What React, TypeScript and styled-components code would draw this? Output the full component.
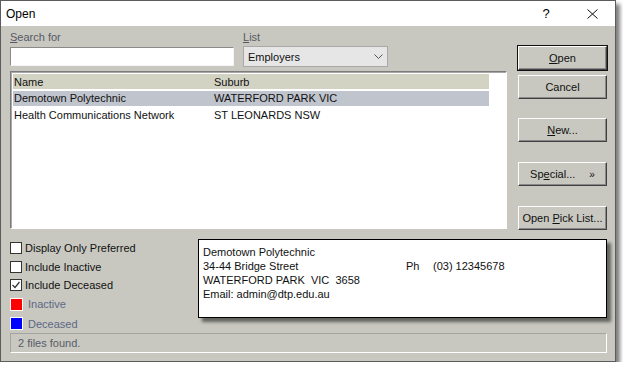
import React from 'react';
import styled, { createGlobalStyle } from 'styled-components';

const Global = createGlobalStyle`
  html, body {
    margin: 0;
    padding: 0;
    background: #ffffff;
  }
  body {
    font-family: 'Liberation Sans', Arial, sans-serif;
    font-size: 11px;
    color: #111;
  }
`;

const Window = styled.div`
  width: 616px;
  height: 362px;
  box-sizing: border-box;
  border: 1px solid #5c5c5c;
  background: #c8c8c0;
  box-shadow: 4px 4px 4px rgba(0, 0, 0, 0.5);
  display: flex;
  flex-direction: column;
`;

const TitleBar = styled.div`
  height: 25px;
  flex: none;
  background: #fff;
  display: flex;
  align-items: center;
  padding-left: 5px;
  font-size: 12px;
  color: #000;
`;

const Title = styled.span`
  flex: 1;
`;

const TitleButton = styled.div`
  width: 46px;
  height: 25px;
  display: flex;
  align-items: center;
  justify-content: center;
  font-size: 13px;
`;

const Body = styled.div`
  flex: 1;
  padding: 4px 7px 0 9px;
  display: flex;
  flex-direction: column;
`;

const Top = styled.div`
  display: grid;
  grid-template-columns: 497px 89px;
  column-gap: 11px;
  align-items: start;
`;

const LeftPane = styled.div`
  display: flex;
  flex-direction: column;
`;

const Fields = styled.div`
  display: flex;
  gap: 9px;
`;

const Field = styled.div<{ $w: number }>`
  width: ${(p) => p.$w}px;
  display: flex;
  flex-direction: column;
`;

const Label = styled.label`
  height: 16px;
  line-height: 14px;
  color: #555a66;
  font-size: 11px;
  u {
    text-decoration: underline;
  }
`;

const TextInput = styled.div`
  height: 19px;
  margin-top: 1px;
  box-sizing: border-box;
  background: #fff;
  border: 1px solid;
  border-color: #8a8a8a #f4f4f4 #f4f4f4 #8a8a8a;
`;

const Select = styled.div`
  height: 21px;
  box-sizing: border-box;
  background: #e6e6e6;
  border: 1px solid #a8a8a8;
  display: flex;
  align-items: center;
  padding: 0 4px 0 4px;
  color: #111;
  span {
    flex: 1;
  }
`;

const ListBox = styled.div`
  margin-top: 4px;
  height: 158px;
  box-sizing: border-box;
  background: #fff;
  border: 1px solid;
  border-color: #7c7c7c #fff #fff #7c7c7c;
  box-shadow: inset 1px 1px 0 #a8a8a8;
  padding: 2px 0 0 2px;
  display: flex;
  flex-direction: column;
  gap: 1.5px;
`;

const Row = styled.div<{ $bg?: string }>`
  width: 475px;
  height: 15px;
  display: grid;
  grid-template-columns: 200px 1fr;
  align-items: center;
  padding-left: 1px;
  background: ${(p) => p.$bg || 'transparent'};
  color: #111;
  white-space: nowrap;
`;

const Buttons = styled.div`
  padding-top: 16px;
  display: flex;
  flex-direction: column;
`;

const Button = styled.div<{ $default?: boolean; $gap: number }>`
  height: 24px;
  margin-top: ${(p) => p.$gap}px;
  box-sizing: border-box;
  border: 1px solid;
  border-color: #fdfdfd #404040 #404040 #fdfdfd;
  box-shadow: ${(p) => (p.$default ? '0 0 0 1px #111, inset -1px -1px 0 #8a8a8a' : 'inset -1px -1px 0 #8a8a8a')};
  display: flex;
  align-items: center;
  justify-content: center;
  color: #111;
  font-size: 11px;
  gap: 14px;
  u {
    text-decoration: underline;
  }
`;

const Chevrons = styled.span`
  font-size: 10px;
`;

const Bottom = styled.div`
  margin-top: 9px;
  height: 93px;
  display: flex;
`;

const Options = styled.div`
  width: 188px;
  padding-top: 3px;
  display: flex;
  flex-direction: column;
  gap: 6.6px;
`;

const Option = styled.div`
  height: 12px;
  display: flex;
  align-items: center;
  gap: 3px;
  color: #111;
`;

const Box = styled.div`
  width: 12px;
  height: 12px;
  box-sizing: border-box;
  background: #fff;
  border: 1px solid #333;
  display: flex;
  align-items: center;
  justify-content: center;
`;

const Legend = styled.div`
  height: 13px;
  display: flex;
  align-items: center;
  gap: 5px;
  color: #5d6784;
`;

const Swatch = styled.div<{ $c: string }>`
  width: 13px;
  height: 13px;
  box-sizing: border-box;
  border: 1px solid #fff;
  background: ${(p) => p.$c};
`;

const Info = styled.div`
  width: 409px;
  height: 79px;
  box-sizing: border-box;
  background: #fff;
  border: 1px solid #000;
  box-shadow: 4px 4px 3px rgba(0, 0, 0, 0.5);
  padding: 5px 0 0 4px;
  display: grid;
  grid-template-columns: 203px 27px 1fr;
  grid-auto-rows: 14px;
  align-items: center;
  color: #111;
  white-space: nowrap;
`;

const Status = styled.div`
  margin-top: 1px;
  width: 597px;
  height: 20px;
  box-sizing: border-box;
  border: 1px solid;
  border-color: #a4a4a0 #fff #fff #a4a4a0;
  display: flex;
  align-items: center;
  padding-left: 7px;
  color: #565c6a;
`;

export default function App() {
  return (
    <>
      <Global />
      <Window>
        <TitleBar>
          <Title>Open</Title>
          <TitleButton>?</TitleButton>
          <TitleButton>
            <svg width="11" height="10" viewBox="0 0 11 10">
              <path d="M0.5 0.5 L10.5 9.5 M10.5 0.5 L0.5 9.5" stroke="#111" strokeWidth="1" fill="none" />
            </svg>
          </TitleButton>
        </TitleBar>
        <Body>
          <Top>
            <LeftPane>
              <Fields>
                <Field $w={224}>
                  <Label>
                    <u>S</u>earch for
                  </Label>
                  <TextInput />
                </Field>
                <Field $w={145}>
                  <Label>
                    <u>L</u>ist
                  </Label>
                  <Select>
                    <span>Employers</span>
                    <svg width="9" height="5" viewBox="0 0 9 5">
                      <path d="M0.5 0.5 L4.5 4.5 L8.5 0.5" stroke="#555" fill="none" />
                    </svg>
                  </Select>
                </Field>
              </Fields>
              <ListBox>
                <Row $bg="#d3d3c4">
                  <span>Name</span>
                  <span>Suburb</span>
                </Row>
                <Row $bg="#c0c4cc">
                  <span>Demotown Polytechnic</span>
                  <span>WATERFORD PARK VIC</span>
                </Row>
                <Row>
                  <span>Health Communications Network</span>
                  <span>ST LEONARDS NSW</span>
                </Row>
              </ListBox>
            </LeftPane>
            <Buttons>
              <Button $default $gap={0}>
                <span>
                  <u>O</u>pen
                </span>
              </Button>
              <Button $gap={5}>Cancel</Button>
              <Button $gap={19}>
                <span>
                  <u>N</u>ew...
                </span>
              </Button>
              <Button $gap={20}>
                <span>
                  Sp<u>e</u>cial...
                </span>
                <Chevrons>»</Chevrons>
              </Button>
              <Button $gap={20}>
                <span>
                  Open <u>P</u>ick List...
                </span>
              </Button>
            </Buttons>
          </Top>
          <Bottom>
            <Options>
              <Option>
                <Box />
                Display Only Preferred
              </Option>
              <Option>
                <Box />
                Include Inactive
              </Option>
              <Option>
                <Box>
                  <svg width="10" height="10" viewBox="0 0 10 10">
                    <path d="M1.5 5 L4 7.5 L8.5 2" stroke="#333" strokeWidth="1.2" fill="none" />
                  </svg>
                </Box>
                Include Deceased
              </Option>
              <Legend>
                <Swatch $c="#ff0000" />
                Inactive
              </Legend>
              <Legend>
                <Swatch $c="#0000ff" />
                Deceased
              </Legend>
            </Options>
            <Info>
              <span>Demotown Polytechnic</span>
              <span />
              <span />
              <span>34-44 Bridge Street</span>
              <span>Ph</span>
              <span>(03) 12345678</span>
              <span>WATERFORD PARK&nbsp; VIC&nbsp; 3658</span>
              <span />
              <span />
              <span>Email: admin@dtp.edu.au</span>
              <span />
              <span />
            </Info>
          </Bottom>
          <Status>2 files found.</Status>
        </Body>
      </Window>
    </>
  );
}
